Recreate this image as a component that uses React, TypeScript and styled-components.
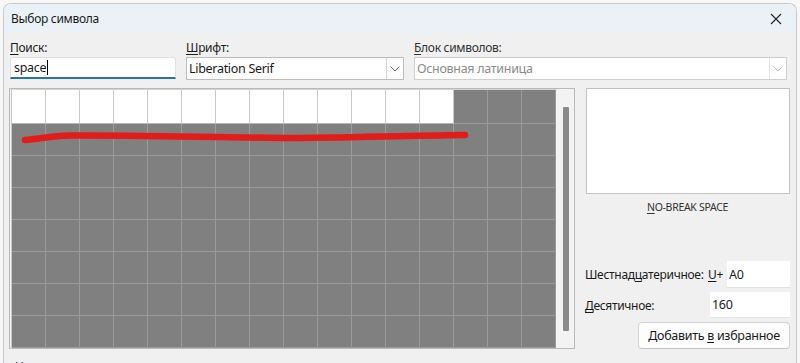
import React from "react";
import styled, { createGlobalStyle } from "styled-components";

const Global = createGlobalStyle`
  html, body { margin: 0; padding: 0; background: #f7f7f7; overflow: hidden; }
  body { font-family: "Noto Sans", "Open Sans", sans-serif; font-size: 12px; color: #1a1a1a; letter-spacing: -0.3px; }
  * { box-sizing: border-box; }
`;

const Window = styled.div`
  margin: 3px 3px 0 3px;
  height: 360px;
  border: 1px solid #c9c9c9;
  border-bottom: none;
  border-radius: 8px 8px 0 0;
  overflow: hidden;
  background: #f0f0f0;
  display: flex;
  flex-direction: column;
`;

const TitleBar = styled.div`
  height: 29px;
  flex: none;
  background: #eaf2f8;
  display: flex;
  align-items: center;
  justify-content: space-between;
  padding: 0 8px 0 7px;
`;

const Title = styled.span`
  font-size: 12px;
  color: #1a1a1a;
`;

const CloseBtn = styled.div`
  width: 20px;
  height: 20px;
  display: flex;
  align-items: center;
  justify-content: center;
  margin-right: 2px;
`;

const Body = styled.div`
  flex: 1;
  padding: 7px 6px 0 5px;
  display: flex;
  flex-direction: column;
`;

const TopRow = styled.div`
  display: grid;
  grid-template-columns: 166px 218px 373px;
  column-gap: 10px;
  padding-left: 1px;
`;

const Field = styled.div`
  display: flex;
  flex-direction: column;
  gap: 1px;
`;

const Label = styled.label<{ $muted?: boolean }>`
  height: 16px;
  line-height: 16px;
  font-size: 12px;
  color: ${(p) => (p.$muted ? "#333" : "#1a1a1a")};
  u { text-decoration: underline; text-underline-offset: 2px; }
`;

const SearchBox = styled.div`
  height: 22px;
  background: #fff;
  border: 1px solid #e0e0e0;
  border-bottom: 2px solid #2a6fb5;
  border-radius: 3px 3px 0 0;
  padding: 0 3px;
  display: flex;
  align-items: center;
  font-size: 12.5px;
`;

const Caret = styled.span`
  display: inline-block;
  width: 1px;
  height: 15px;
  background: #000;
  margin-left: 1px;
`;

const Combo = styled.div<{ $disabled?: boolean }>`
  height: 23px;
  background: #fff;
  border: 1px solid ${(p) => (p.$disabled ? "#cfcfcf" : "#bdbdbd")};
  display: flex;
  align-items: stretch;
  color: ${(p) => (p.$disabled ? "#8c8c8c" : "#1a1a1a")};
  font-size: 12.5px;
`;

const ComboText = styled.div`
  flex: 1;
  display: flex;
  align-items: center;
  padding-left: 2px;
`;

const ComboArrow = styled.div<{ $disabled?: boolean }>`
  width: 17px;
  border-left: 1px solid ${(p) => (p.$disabled ? "#e6e6e6" : "#d6d6d6")};
  display: flex;
  align-items: center;
  justify-content: center;
`;

const Main = styled.div`
  margin-top: 8px;
  display: flex;
  gap: 10px;
`;

const GridBox = styled.div`
  position: relative;
  width: 566px;
  height: 261px;
  border: 1px solid #b9b9b9;
  background: #f3f3f3;
  display: flex;
  padding: 0 0 0 1px;
`;

const CharGrid = styled.div`
  display: grid;
  grid-template-columns: repeat(16, 34px);
  grid-template-rows: 34px repeat(7, 32px);
  border-left: 1px solid #c8c8c8;
  border-top: 1px solid #d4d4d4;
  height: 260px;
  width: 546px;
`;

const Cell = styled.div<{ $filled?: boolean }>`
  background: ${(p) => (p.$filled ? "#808080" : "#ffffff")};
  border-right: 1px solid ${(p) => (p.$filled ? "#9b9b9b" : "#cacaca")};
  border-bottom: 1px solid ${(p) => (p.$filled ? "#9b9b9b" : "#b5b5b5")};
`;

const ScrollTrack = styled.div`
  width: 17px;
  display: flex;
  justify-content: flex-start;
  padding-top: 18px;
  padding-left: 6px;
`;

const Thumb = styled.div`
  width: 6px;
  height: 224px;
  background: #8a8a8a;
  border-radius: 1px;
`;

const Stroke = styled.svg`
  position: absolute;
  left: 0;
  top: 0;
  pointer-events: none;
`;

const Side = styled.div`
  width: 207px;
  display: flex;
  flex-direction: column;
`;

const Preview = styled.div`
  height: 106px;
  margin-left: 1px;
  background: #fff;
  border: 1px solid #c3c3c3;
`;

const CharName = styled.div`
  margin-top: 6px;
  text-align: center;
  font-size: 10.5px;
  color: #333;
  u { text-decoration: underline; text-underline-offset: 2px; }
`;

const Spacer = styled.div`
  flex: 1;
`;

const ValueRow = styled.div<{ $inputW: number }>`
  display: grid;
  grid-template-columns: 1fr auto ${(p) => p.$inputW}px;
  align-items: center;
  margin-bottom: 4px;
  u { text-decoration: underline; text-underline-offset: 2px; }
`;

const ValueLabel = styled.span`
  font-size: 12px;
`;

const Prefix = styled.span`
  font-size: 12px;
  padding-right: 4px;
`;

const ValueInput = styled.div<{ $h: number }>`
  height: ${(p) => p.$h}px;
  background: #fff;
  border-bottom: 1px solid #e2e2e2;
  display: flex;
  align-items: center;
  padding-left: 2px;
  font-size: 12.5px;
`;

const ButtonRow = styled.div`
  display: flex;
  justify-content: flex-end;
`;

const Button = styled.div`
  width: 152px;
  height: 27px;
  background: #fdfdfd;
  border: 1px solid #d4d4d4;
  border-bottom-color: #c4c4c4;
  border-radius: 4px;
  display: flex;
  align-items: center;
  justify-content: center;
  font-size: 12.5px;
  u { text-decoration: underline; text-underline-offset: 2px; }
`;

const Footer = styled.div`
  margin-top: 9px;
  padding-left: 6px;
  font-size: 12px;
  u { text-decoration: underline; text-underline-offset: 2px; }
`;

const Chevron = ({ color }: { color: string }) => (
  <svg width="10" height="6" viewBox="0 0 10 6">
    <path d="M0.5 0.5 L5 5 L9.5 0.5" fill="none" stroke={color} strokeWidth="1" />
  </svg>
);

export default function App() {
  const cells = Array.from({ length: 128 }, (_, i) => i >= 13);
  return (
    <>
      <Global />
      <Window>
        <TitleBar>
          <Title>Выбор символа</Title>
          <CloseBtn>
            <svg width="12" height="12" viewBox="0 0 12 12">
              <path d="M1 1 L11 11 M11 1 L1 11" stroke="#222" strokeWidth="1.1" />
            </svg>
          </CloseBtn>
        </TitleBar>
        <Body>
          <TopRow>
            <Field>
              <Label>
                <u>П</u>оиск:
              </Label>
              <SearchBox>
                space
                <Caret />
              </SearchBox>
            </Field>
            <Field>
              <Label>
                <u>Ш</u>рифт:
              </Label>
              <Combo>
                <ComboText>Liberation Serif</ComboText>
                <ComboArrow>
                  <Chevron color="#6b6b6b" />
                </ComboArrow>
              </Combo>
            </Field>
            <Field>
              <Label $muted>
                <u>Б</u>лок символов:
              </Label>
              <Combo $disabled>
                <ComboText>Основная латиница</ComboText>
                <ComboArrow $disabled>
                  <Chevron color="#bdbdbd" />
                </ComboArrow>
              </Combo>
            </Field>
          </TopRow>
          <Main>
            <GridBox>
              <CharGrid>
                {cells.map((f, i) => (
                  <Cell key={i} $filled={f} />
                ))}
              </CharGrid>
              <ScrollTrack>
                <Thumb />
              </ScrollTrack>
              <Stroke width="566" height="261" viewBox="0 0 566 261">
                <path
                  d="M15 51 C 30 50, 40 47, 60 46.5 C 120 46, 200 48, 270 49 C 330 49, 380 47, 455 46"
                  fill="none"
                  stroke="#e21b1b"
                  strokeWidth="6.5"
                  strokeLinecap="round"
                />
              </Stroke>
            </GridBox>
            <Side>
              <Preview />
              <CharName>
                <u>N</u>O-BREAK SPACE
              </CharName>
              <Spacer />
              <ValueRow $inputW={63}>
                <ValueLabel>
                  Шестнад<u>ц</u>атеричное:
                </ValueLabel>
                <Prefix>
                  <u>U</u>+
                </Prefix>
                <ValueInput $h={27}>A0</ValueInput>
              </ValueRow>
              <ValueRow $inputW={80}>
                <ValueLabel>
                  <u>Д</u>есятичное:
                </ValueLabel>
                <Prefix />
                <ValueInput $h={26}>160</ValueInput>
              </ValueRow>
              <ButtonRow>
                <Button>
                  Добавить&nbsp;<u>в</u>&nbsp;избранное
                </Button>
              </ButtonRow>
            </Side>
          </Main>
          <Footer>
            <u>Н</u>едавние символы:
          </Footer>
        </Body>
      </Window>
    </>
  );
}
